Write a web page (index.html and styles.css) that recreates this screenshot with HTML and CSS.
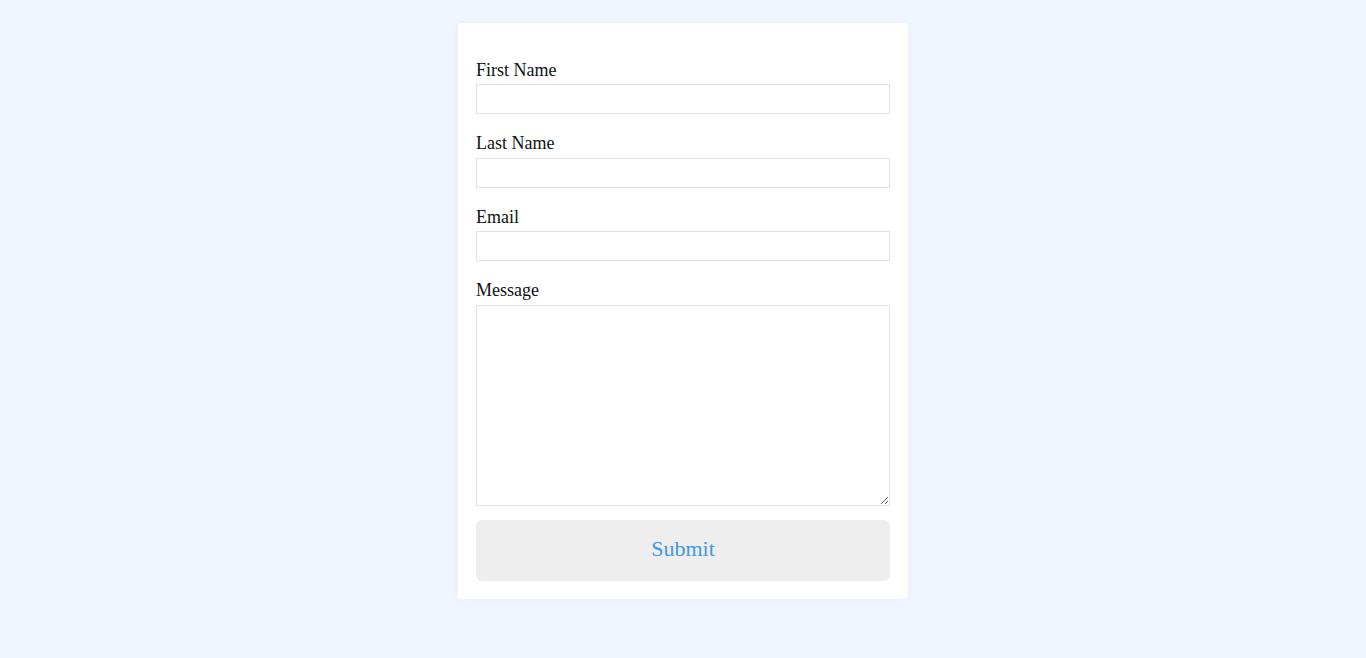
FILE: index.html
```html
<!DOCTYPE html>
<html lang="en">
<head>
<meta charset="utf-8">
<title>Contact</title>
<link rel="stylesheet" href="styles.css">
</head>
<body>
<form class="card">
  <div class="field">
    <label class="label" for="fn">First Name</label>
    <input class="input" id="fn" type="text">
  </div>
  <div class="field">
    <label class="label" for="ln">Last Name</label>
    <input class="input" id="ln" type="text">
  </div>
  <div class="field">
    <label class="label" for="em">Email</label>
    <input class="input" id="em" type="email">
  </div>
  <div class="field">
    <label class="label" for="msg">Message</label>
    <textarea class="textarea" id="msg"></textarea>
  </div>
  <button class="submit" type="button">Submit</button>
</form>
</body>
</html>
```

FILE: styles.css
```css
html, body {
  margin: 0;
  padding: 0;
}
body {
  background: #eff6ff;
  font-family: "Liberation Serif", "Times New Roman", serif;
  color: #111;
  min-height: 658px;
  padding-top: 23px;
  box-sizing: border-box;
}
.card {
  width: 450px;
  margin: 0 auto;
  box-sizing: border-box;
  background: #fff;
  border-radius: 4px;
  box-shadow: 0 0 10px rgba(0, 0, 0, 0.04);
  padding: 36.5px 18px 18px;
  display: flex;
  flex-direction: column;
}
.field {
  display: flex;
  flex-direction: column;
  margin-bottom: 19px;
}
.field:last-of-type {
  margin-bottom: 14px;
}
.label {
  font-size: 18px;
  line-height: 20.5px;
  margin-bottom: 4px;
}
.input, .textarea {
  box-sizing: border-box;
  width: 100%;
  border: 1px solid #e2e2e2;
  background: #fff;
  margin: 0;
  padding: 0 4px;
  font-family: inherit;
  font-size: 16px;
  outline: none;
}
.input {
  height: 30px;
}
.textarea {
  height: 201px;
  resize: both;
  display: block;
}
.submit {
  height: 61px;
  border: none;
  border-radius: 6px;
  background: #eeeeee;
  color: #3f98e2;
  font-family: inherit;
  font-size: 22px;
  padding: 0 0 3px;
  cursor: pointer;
}
```
